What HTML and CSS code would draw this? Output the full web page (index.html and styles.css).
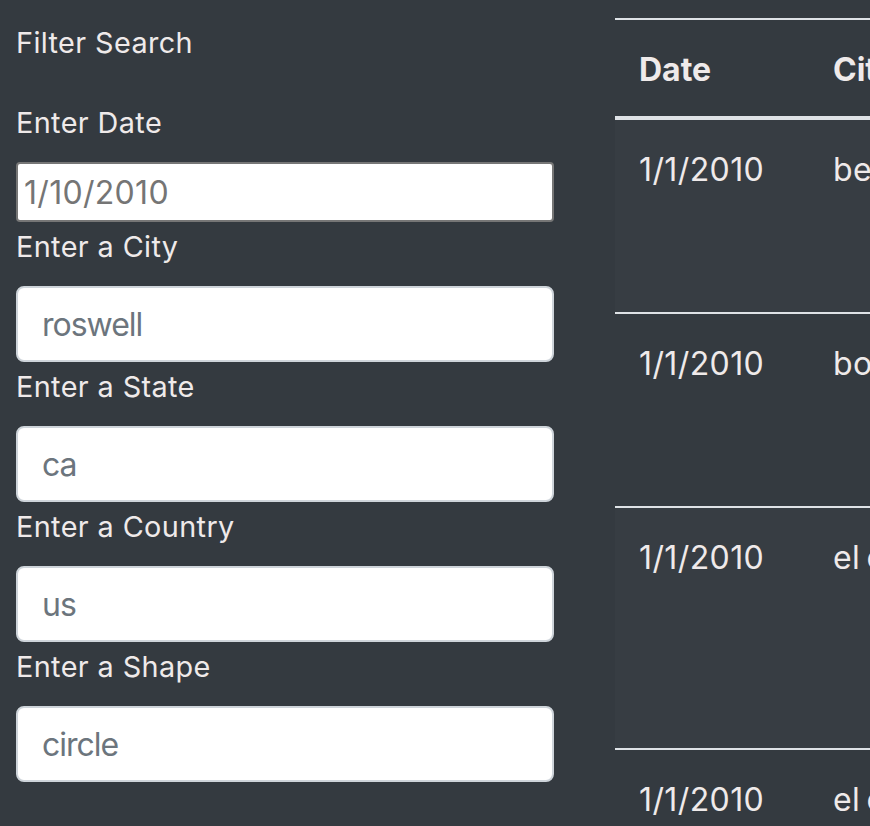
FILE: index.html
```html
<!DOCTYPE html>
<html lang="en">
<head>
<meta charset="utf-8">
<title>UFO Sightings</title>
<link rel="stylesheet" href="styles.css">
</head>
<body>
<div class="page">
  <aside class="filters">
    <h5 class="filters-title">Filter Search</h5>
    <form class="filter-form">
      <label class="field-label" for="datetime">Enter Date</label>
      <input class="date-input" id="datetime" type="text" placeholder="1/10/2010">
      <label class="field-label" for="city">Enter a City</label>
      <input class="form-control" id="city" type="text" placeholder="roswell">
      <label class="field-label" for="state">Enter a State</label>
      <input class="form-control" id="state" type="text" placeholder="ca">
      <label class="field-label" for="country">Enter a Country</label>
      <input class="form-control" id="country" type="text" placeholder="us">
      <label class="field-label" for="shape">Enter a Shape</label>
      <input class="form-control" id="shape" type="text" placeholder="circle">
    </form>
  </aside>
  <section class="results">
    <table class="ufo-table">
      <thead>
        <tr>
          <th class="col-date">Date</th>
          <th>City</th>
          <th>State</th>
          <th>Country</th>
          <th>Shape</th>
          <th>Duration</th>
          <th>Comments</th>
        </tr>
      </thead>
      <tbody>
        <tr class="row-odd lines-3">
          <td>1/1/2010</td><td>benton</td><td>ar</td><td>us</td><td>circle</td><td>5 min</td><td>Bright orange circle in the sky</td>
        </tr>
        <tr class="row-even lines-3">
          <td>1/1/2010</td><td>bonita</td><td>ca</td><td>us</td><td>light</td><td>13 minutes</td><td>Three bright red lights witnessed</td>
        </tr>
        <tr class="row-odd lines-4">
          <td>1/1/2010</td><td>el cajon</td><td>ca</td><td>us</td><td>triangle</td><td>5 minutes</td><td>Strange triangle shape over the hills</td>
        </tr>
        <tr class="row-even lines-3">
          <td>1/1/2010</td><td>el cajon</td><td>ca</td><td>us</td><td>circle</td><td>2 minutes</td><td>Glowing circle moving slowly</td>
        </tr>
      </tbody>
    </table>
  </section>
</div>
</body>
</html>
```
FILE: styles.css
```css
html, body {
  margin: 0;
  padding: 0;
  background: #343a40;
  overflow: hidden;
}

body {
  font-family: Inter, "Open Sans", "Liberation Sans", sans-serif;
  color: #efeaea;
}

.page {
  display: flex;
  align-items: flex-start;
  gap: 61px;
  padding: 0 0 0 16px;
  width: 100%;
  box-sizing: border-box;
  overflow: hidden;
}

.filters {
  flex: 0 0 538px;
  width: 538px;
  padding-top: 21px;
}

.filters-title {
  margin: 0 0 37px;
  font-size: 28.8px;
  font-weight: 400;
  line-height: 43px;
  letter-spacing: 0.4px;
}

.filter-form {
  display: flex;
  flex-direction: column;
}

.field-label {
  font-size: 28.8px;
  line-height: 43px;
  letter-spacing: 0.4px;
  margin: 3px 0 18px;
}

.filters-title + .filter-form .field-label:first-child {
  margin-top: 0;
}

.date-input {
  box-sizing: border-box;
  height: 60px;
  width: 100%;
  padding: 0 6px;
  border: 2px solid #767676;
  border-radius: 4px;
  background: #fff;
  font-family: inherit;
  font-size: 32px;
  letter-spacing: 0.3px;
  color: #111;
}

.date-input::placeholder {
  color: #757575;
}

.form-control {
  box-sizing: border-box;
  height: 76px;
  width: 100%;
  padding: 12px 24px;
  border: 2px solid #ced4da;
  border-radius: 8px;
  background: #fff;
  font-family: inherit;
  font-size: 32px;
  line-height: 48px;
  letter-spacing: -1px;
  color: #495057;
}

.form-control::placeholder {
  color: #6c757d;
}

.results {
  flex: 1 1 auto;
  min-width: 0;
  padding-top: 18px;
  overflow: hidden;
}

.ufo-table {
  border-collapse: separate;
  border-spacing: 0;
  width: 1800px;
  table-layout: fixed;
  font-size: 32px;
  line-height: 48px;
  color: #efeaea;
}

.ufo-table th,
.ufo-table td {
  padding: 26px 24px 22px;
  text-align: left;
  vertical-align: top;
}

.ufo-table td {
  letter-spacing: 0.4px;
  word-spacing: -3px;
}

.ufo-table th {
  font-weight: 700;
  border-top: 2px solid #dee2e6;
  border-bottom: 4px solid #dee2e6;
}

.ufo-table th.col-date {
  width: 146px;
}

.ufo-table td {
  border-top: 2px solid #dee2e6;
}

.ufo-table tbody tr:first-child td {
  border-top: 0;
}

.row-odd td {
  background: rgba(255, 255, 255, 0.015);
}

.lines-3 td {
  height: 144px;
}

.lines-4 td {
  height: 192px;
}
```
